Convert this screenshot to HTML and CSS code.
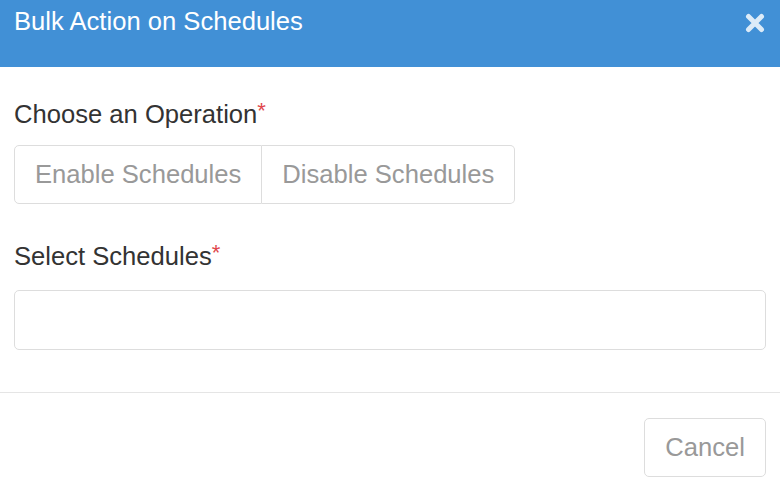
FILE: index.html
```html
<!DOCTYPE html>
<html>
<head>
<meta charset="utf-8">
<link rel="stylesheet" href="styles.css">
</head>
<body>
<div class="modal">
  <div class="modal-header">
    <h4 class="modal-title">Bulk Action on Schedules</h4>
    <button class="close" aria-label="Close">
      <svg width="20" height="20" viewBox="0 0 20 20"><path d="M3.5 3.5 L16.5 16.5 M16.5 3.5 L3.5 16.5" stroke="currentColor" stroke-width="5" stroke-linecap="round"/></svg>
    </button>
  </div>
  <div class="modal-body">
    <label class="field-label first">Choose an Operation<span class="req">*</span></label>
    <div class="btn-group">
      <button class="btn">Enable Schedules</button>
      <button class="btn">Disable Schedules</button>
    </div>
    <label class="field-label second">Select Schedules<span class="req">*</span></label>
    <div class="select-box"></div>
  </div>
  <div class="modal-footer">
    <button class="btn single">Cancel</button>
  </div>
</div>
</body>
</html>
```

FILE: styles.css
```css
* { box-sizing: border-box; }
html, body { margin: 0; padding: 0; background: #fff; }
body {
  font-family: "Liberation Sans", Arial, sans-serif;
  font-size: 25.6px;
  color: #333;
  line-height: 36.6px;
}
.modal { width: 780px; }
.modal-header {
  height: 67px;
  background: #4190d6;
  padding: 3px 14px 0 14px;
  display: flex;
  justify-content: space-between;
  align-items: flex-start;
}
.modal-title {
  margin: 0;
  font-size: 25.6px;
  font-weight: normal;
  color: #fff;
  line-height: 36.6px;
}
.close {
  border: 0;
  background: none;
  padding: 0;
  margin: 10px 1px 0 0;
  color: rgba(255,255,255,0.82);
  width: 20px;
  height: 20px;
  display: flex;
}
.modal-body {
  padding: 29px 14px 0 14px;
  display: flex;
  flex-direction: column;
  align-items: flex-start;
}
.field-label { display: block; }
.field-label.first { margin-bottom: 12px; }
.field-label.second { margin-top: 34px; margin-bottom: 16px; }
.req { color: #e0474c; font-size: 22px; vertical-align: top; line-height: 30px; }
.btn-group { display: flex; }
.btn {
  font-family: inherit;
  font-size: 25.6px;
  line-height: 37px;
  color: #999;
  background: #fff;
  border: 1px solid #ddd;
  padding: 10px 20px;
  margin: 0;
}
.btn-group .btn:first-child { border-radius: 5px 0 0 5px; }
.btn-group .btn:last-child { border-radius: 0 5px 5px 0; border-left: 0; }
.select-box {
  width: 100%;
  height: 60px;
  border: 1px solid #ddd;
  border-radius: 5px;
}
.modal-footer {
  margin-top: 42px;
  border-top: 1px solid #e5e5e5;
  padding: 25px 14px 0 14px;
  display: flex;
  justify-content: flex-end;
}
.btn.single { border-radius: 5px; padding: 10px 20px; }
```
